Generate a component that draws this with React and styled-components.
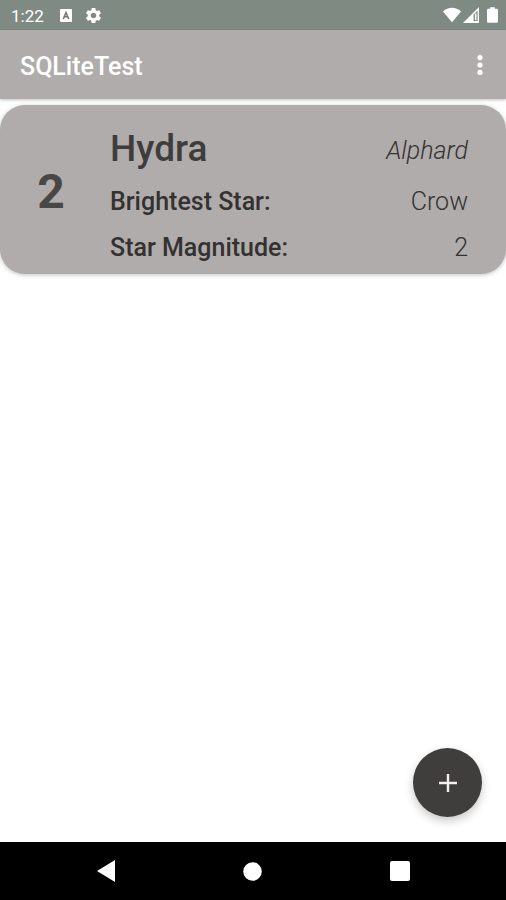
import React from 'react'
import styled, { createGlobalStyle } from 'styled-components'

const GlobalStyle = createGlobalStyle`
    * {
        box-sizing: border-box;
    }
    body {
        margin: 0;
        background: #fff;
        font-family: Roboto, sans-serif;
    }
    button {
        margin: 0;
        padding: 0;
        border: none;
        background: transparent;
        cursor: pointer;
    }
    svg {
        display: block;
    }
`
const StyledScreen = styled.div`
    display: flex;
    flex-direction: column;
    min-height: 100vh;
`
const StyledStatusBar = styled.div`
    display: flex;
    align-items: center;
    justify-content: space-between;
    height: 30px;
    padding: 0 8px 0 11px;
    background: #7f8b82;
    color: #fff;
`
const StyledStatusGroup = styled.div`
    display: flex;
    align-items: center;
    gap: ${props => props.$gap};
`
const StyledClock = styled.span`
    margin-right: 4px;
    padding-top: 2px;
    font-size: 17px;
    line-height: 28px;
`
const StyledAppBar = styled.header`
    display: flex;
    align-items: center;
    justify-content: space-between;
    height: 69px;
    padding: 0 14px 0 20px;
    background: #b0acab;
    color: #fff;
    box-shadow: 0 1px 3px rgba(0, 0, 0, 0.25);
`
const StyledTitle = styled.h1`
    margin: 0;
    padding-top: 4px;
    font-size: 25px;
    font-weight: 500;
    line-height: 32px;
`
const StyledMenuButton = styled.button`
    width: 24px;
    height: 40px;
    color: #fff;
`
const StyledList = styled.main`
    flex: 1;
    padding: 6px 0;
`
const StyledCard = styled.article`
    display: flex;
    align-items: center;
    padding: 4px 38px 0 0;
    border-radius: 25px;
    background: #b0acab;
    box-shadow: 0 1px 4px rgba(0, 0, 0, 0.25);
`
const StyledRank = styled.div`
    flex: none;
    width: 110px;
    padding-right: 8px;
    color: #494746;
    font-size: 48px;
    font-weight: 700;
    line-height: 56px;
    text-align: center;
`
const StyledDetails = styled.div`
    flex: 1;
    padding: 10px 0 3px;
    color: #343231;
`
const StyledRow = styled.div`
    display: flex;
    align-items: center;
    justify-content: space-between;
    height: ${props => props.height};
`
const StyledName = styled.h2`
    margin: 0;
    color: #3f3d3c;
    font-size: 37px;
    font-weight: 500;
    line-height: 44px;
`
const StyledLabel = styled.span`
    font-size: 25px;
    font-weight: 500;
    line-height: 32px;
`
const StyledValue = styled.span`
    font-size: 25px;
    font-style: ${props => props.$italic ? 'italic' : 'normal'};
    font-weight: 300;
    line-height: 32px;
    padding-top: ${props => props.$italic ? '4px' : '0'};
`
const StyledFooter = styled.footer`
    position: sticky;
    bottom: 0;
`
const StyledAddButton = styled.button`
    position: absolute;
    right: 24px;
    bottom: calc(100% + 25px);
    display: flex;
    align-items: center;
    justify-content: center;
    width: 69px;
    height: 69px;
    border-radius: 50%;
    background: #403e3c;
    box-shadow: 0 4px 10px rgba(0, 0, 0, 0.22);
`
const StyledNavBar = styled.nav`
    display: flex;
    height: 58px;
    padding: 0 32px;
    background: #000;
`
const StyledNavButton = styled.button`
    flex: 1;
    display: flex;
    align-items: center;
    justify-content: center;
`

const constellations = [
    { id: 2, name: 'Hydra', alias: 'Alphard', star: 'Crow', magnitude: 2 },
]

const KeyboardIcon = () => (
    <svg width="12" height="13" viewBox="0 0 12 13" aria-hidden="true">
        <rect width="12" height="13" rx="1" fill="#fff"/>
        <path d="M3.3 10L6 3.4L8.7 10M4.3 7.8H7.7" fill="none" stroke="#6d7870" strokeWidth="1.5"/>
    </svg>
)

const GearIcon = () => (
    <svg width="19" height="19" viewBox="0 0 24 24" fill="#fff" aria-hidden="true">
        <path d="M19.14 12.94c.04-.3.06-.61.06-.94 0-.32-.02-.64-.07-.94l2.03-1.58c.18-.14.23-.41.12-.61l-1.92-3.32c-.12-.22-.37-.29-.59-.22l-2.39.96c-.5-.38-1.03-.7-1.62-.94l-.36-2.54c-.04-.24-.24-.41-.48-.41h-3.84c-.24 0-.43.17-.47.41l-.36 2.54c-.59.24-1.13.57-1.62.94l-2.39-.96c-.22-.08-.47 0-.59.22L2.74 8.87c-.12.21-.08.47.12.61l2.03 1.58c-.05.3-.09.63-.09.94s.02.64.07.94l-2.03 1.58c-.18.14-.23.41-.12.61l1.92 3.32c.12.22.37.29.59.22l2.39-.96c.5.38 1.03.7 1.62.94l.36 2.54c.05.24.24.41.48.41h3.84c.24 0 .44-.17.47-.41l.36-2.54c.59-.24 1.13-.56 1.62-.94l2.39.96c.22.08.47 0 .59-.22l1.92-3.32c.12-.22.07-.47-.12-.61l-2.01-1.58zM12 15.6c-1.98 0-3.6-1.62-3.6-3.6s1.62-3.6 3.6-3.6 3.6 1.62 3.6 3.6-1.62 3.6-3.6 3.6z"/>
    </svg>
)

const WifiIcon = () => (
    <svg width="18" height="16" viewBox="0 0 19 16" fill="#fff" aria-hidden="true">
        <path d="M0 4.2C5.4 -0.9 13.6 -0.9 19 4.2L9.5 15.6Z"/>
    </svg>
)

const SignalIcon = () => (
    <svg width="16" height="16" viewBox="0 0 16 16" aria-hidden="true">
        <path d="M0 16L16 0V16Z" fill="#fff"/>
        <path d="M10.6 7.4L14.6 3.4V14H10.6Z" fill="#7f8b82"/>
        <path d="M12.7 6.4V13" stroke="#fff" strokeWidth="1.5"/>
    </svg>
)

const BatteryIcon = () => (
    <svg width="11" height="16" viewBox="0 0 12 17" fill="#fff" aria-hidden="true">
        <path d="M3.5 0H8.5V1.8H10.5Q12 1.8 12 3.3V15.5Q12 17 10.5 17H1.5Q0 17 0 15.5V3.3Q0 1.8 1.5 1.8H3.5Z"/>
    </svg>
)

const StatusBar = () => (
    <StyledStatusBar>
        <StyledStatusGroup $gap="12px">
            <StyledClock>1:22</StyledClock>
            <KeyboardIcon/>
            <GearIcon/>
        </StyledStatusGroup>
        <StyledStatusGroup $gap="8px">
            <StyledStatusGroup $gap="2px">
                <WifiIcon/>
                <SignalIcon/>
            </StyledStatusGroup>
            <BatteryIcon/>
        </StyledStatusGroup>
    </StyledStatusBar>
)

const ConstellationCard = ({ item }) => (
    <StyledCard>
        <StyledRank>{item.id}</StyledRank>
        <StyledDetails>
            <StyledRow height="60px">
                <StyledName>{item.name}</StyledName>
                <StyledValue $italic>{item.alias}</StyledValue>
            </StyledRow>
            <StyledRow height="46px">
                <StyledLabel>Brightest Star:</StyledLabel>
                <StyledValue>{item.star}</StyledValue>
            </StyledRow>
            <StyledRow height="46px">
                <StyledLabel>Star Magnitude:</StyledLabel>
                <StyledValue>{item.magnitude}</StyledValue>
            </StyledRow>
        </StyledDetails>
    </StyledCard>
)

const App = () => (
    <StyledScreen>
        <GlobalStyle/>
        <StatusBar/>
        <StyledAppBar>
            <StyledTitle>SQLiteTest</StyledTitle>
            <StyledMenuButton aria-label="More options">
                <svg width="24" height="40" viewBox="0 0 24 40" fill="currentColor">
                    <circle cx="12" cy="12.6" r="2.6"/>
                    <circle cx="12" cy="20" r="2.6"/>
                    <circle cx="12" cy="27.4" r="2.6"/>
                </svg>
            </StyledMenuButton>
        </StyledAppBar>
        <StyledList>
            {constellations.map(item => <ConstellationCard key={item.id} item={item}/>)}
        </StyledList>
        <StyledFooter>
            <StyledAddButton aria-label="Add">
                <svg width="18" height="18" viewBox="0 0 18 18" stroke="#f4f1ec" strokeWidth="2.4">
                    <path d="M9 0V18M0 9H18"/>
                </svg>
            </StyledAddButton>
            <StyledNavBar>
                <StyledNavButton aria-label="Back">
                    <svg width="18" height="22" viewBox="0 0 18 22" fill="#fff">
                        <path d="M0 11L18 0V22Z"/>
                    </svg>
                </StyledNavButton>
                <StyledNavButton aria-label="Home">
                    <svg width="19" height="19" viewBox="0 0 19 19" fill="#fff">
                        <circle cx="9.5" cy="9.5" r="9.3"/>
                    </svg>
                </StyledNavButton>
                <StyledNavButton aria-label="Recent apps">
                    <svg width="20" height="20" viewBox="0 0 20 20" fill="#fff">
                        <rect width="20" height="20" rx="2"/>
                    </svg>
                </StyledNavButton>
            </StyledNavBar>
        </StyledFooter>
    </StyledScreen>
)

export default App
